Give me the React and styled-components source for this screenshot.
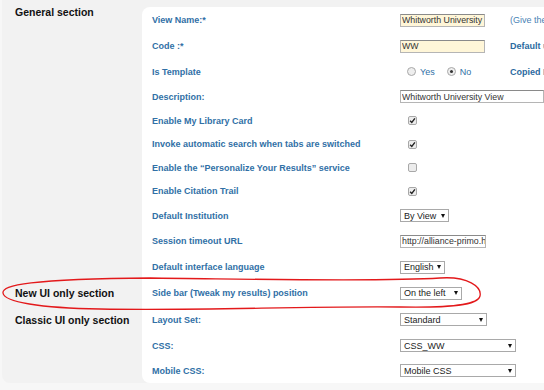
import React  from 'react';
import styled, { createGlobalStyle } from 'styled-components';

const SECTIONS = [
  {
    title : 'General section',
    pad   : 0,
    rows  : [
      { label: 'View Name:*', h: 26, control: { kind: 'text', value: 'Whitworth University', width: 85, tint: true }, note: { text: '(Give the view a name)', bold: false } },
      { label: 'Code :*', h: 26, control: { kind: 'text', value: 'WW', width: 85, tint: true }, note: { text: 'Default user interface', bold: true } },
      { label: 'Is Template', h: 25, control: { kind: 'radio', options: ['Yes', 'No'], selected: 1 }, note: { text: 'Copied From', bold: true } },
      { label: 'Description:', h: 25, control: { kind: 'text', value: 'Whitworth University View', width: 170 } },
      { label: 'Enable My Library Card', h: 23, control: { kind: 'check', checked: true } },
      { label: 'Invoke automatic search when tabs are switched', h: 24, control: { kind: 'check', checked: true } },
      { label: 'Enable the \u201cPersonalize Your Results\u201d service', h: 23, control: { kind: 'check', checked: false } },
      { label: 'Enable Citation Trail', h: 24, control: { kind: 'check', checked: true } },
      { label: 'Default Institution', h: 25, control: { kind: 'select', value: 'By View', width: 49 } },
      { label: 'Session timeout URL', h: 26, control: { kind: 'text', value: 'http://alliance-primo.hosted.exlibrisgroup.com', width: 86 } },
      { label: 'Default interface language', h: 26, control: { kind: 'select', value: 'English', width: 45 } },
    ],
  },
  {
    title : 'New UI only section',
    pad   : 8,
    rows  : [
      { label: 'Side bar (Tweak my results) position', h: 26, control: { kind: 'select', value: 'On the left', width: 62 } },
    ],
  },
  {
    title : 'Classic UI only section',
    pad   : 9,
    rows  : [
      { label: 'Layout Set:', h: 27, control: { kind: 'select', value: 'Standard', width: 87 } },
      { label: 'CSS:', h: 25, control: { kind: 'select', value: 'CSS_WW', width: 116 } },
      { label: 'Mobile CSS:', h: 25, control: { kind: 'select', value: 'Mobile CSS', width: 116 } },
    ],
  },
];

const Control = ({ control }) => {
  switch (control.kind) {
    case 'text':
      return (
        <App.TextField
          readOnly
          defaultValue={control.value}
          $width={control.width}
          $tint={control.tint}
        />
      );
    case 'radio':
      return (
        <App.RadioGroup>
          {control.options.map((o, i) =>
            <App.RadioOption key={o}>
              <App.Radio $on={i === control.selected} />
              {o}
            </App.RadioOption>
          )}
        </App.RadioGroup>
      );
    case 'check':
      return (
        <App.Check>
          <svg width="9" height="9" viewBox="0 0 9 9">
            <rect x="0.5" y="0.5" width="8" height="8" rx="1.5" fill="#ececec" stroke="#a8a8a8" />
            {control.checked &&
              <path d="M2.1 4.7 L3.8 6.4 L6.9 2.4" fill="none" stroke="#222" strokeWidth="1.4" />}
          </svg>
        </App.Check>
      );
    default:
      return (
        <App.Select $width={control.width}>
          {control.value}
          <App.Arrow />
        </App.Select>
      );
  }
};

const App = () => (
  <App.Page>
    <GlobalStyle />
    <App.Sheet>
      {SECTIONS.map((s, si) =>
        <App.Section key={s.title}>
          <App.SectionTitle $pad={s.pad}>{s.title}</App.SectionTitle>
          <App.Fields $first={si === 0} $last={si === SECTIONS.length - 1}>
            {s.rows.map(r =>
              <App.Row key={r.label} $h={r.h}>
                <App.Label>{r.label}</App.Label>
                <App.Cell $wide={!r.note}>
                  <Control control={r.control} />
                </App.Cell>
                {r.note &&
                  <App.Note $bold={r.note.bold}>{r.note.text}</App.Note>}
              </App.Row>
            )}
          </App.Fields>
        </App.Section>
      )}
    </App.Sheet>
    <App.Scribble width="544" height="390" viewBox="0 0 544 390">
      <path
        d="M150 278 C250 279, 380 282, 440 278 C468 276, 482 287, 480 296 C478 305, 452 308, 400 307 C300 306, 200 311, 100 309 C40 308, 4 302, 3 293 C2 285, 30 279, 150 278"
        fill="none"
        stroke="#e3191b"
        strokeWidth="1.3"
      />
    </App.Scribble>
  </App.Page>
);

const GlobalStyle = createGlobalStyle`
  html, body {
    margin     : 0;
    padding    : 0;
    background : #f5f5f5;
  }
`;

App.Page = styled.div`
  position    : relative;
  width       : 544px;
  height      : 390px;
  overflow    : hidden;
  background  : #f7f7f7;
  font-family : 'Liberation Sans', Arial, sans-serif;
`;

App.Sheet = styled.div`
  margin-left                : 2px;
  padding-top                : 7px;
  background                 : #f2f2f2;
  border-bottom-left-radius  : 8px;
`;

App.Section = styled.div`
  display : flex;
`;

App.SectionTitle = styled.div`
  width        : 140px;
  flex-shrink  : 0;
  box-sizing   : border-box;
  padding      : ${p => p.$pad}px 0 0 13px;
  font-size    : 10.5px;
  font-weight  : bold;
  line-height  : 10px;
  color        : #111;
  white-space  : nowrap;
`;

App.Fields = styled.div`
  flex          : 1;
  min-width     : 0;
  padding-left  : 10px;
  background    : #fff;
  overflow      : hidden;
  border-radius : ${p => p.$first ? '8px' : '0'} 0 0 ${p => p.$last ? '8px' : '0'};
`;

App.Row = styled.div`
  display               : grid;
  grid-template-columns : 248px 110px 1fr;
  align-items           : center;
  height                : ${p => p.$h}px;
`;

App.Label = styled.div`
  font-size   : 9px;
  font-weight : bold;
  color       : #3170a6;
  white-space : nowrap;
`;

App.Cell = styled.div`
  display     : flex;
  align-items : center;
  grid-column : ${p => p.$wide ? '2 / 4' : 'auto'};
`;

App.Note = styled.div`
  font-size   : 9px;
  font-weight : ${p => p.$bold ? 'bold' : 'normal'};
  color       : ${p => p.$bold ? '#2c6aa0' : '#4a82b5'};
  white-space : nowrap;
`;

App.TextField = styled.input`
  box-sizing  : border-box;
  width       : ${p => p.$width}px;
  height      : 13px;
  margin      : 0;
  padding     : 0 0 0 1px;
  border      : 1px solid #b5b5b5;
  border-top  : 1px solid #8a8a8a;
  background  : ${p => p.$tint ? '#fff6d8' : '#fff'};
  font-family : 'Liberation Sans', Arial, sans-serif;
  font-size   : 8.8px;
  color       : #333;
  outline     : none;
`;

App.RadioGroup = styled.div`
  display      : flex;
  align-items  : center;
  gap          : 12px;
  padding-left : 7px;
`;

App.RadioOption = styled.span`
  display     : flex;
  align-items : center;
  gap         : 4px;
  font-size   : 9px;
  color       : #3170a6;
`;

App.Radio = styled.span`
  position      : relative;
  width         : 9px;
  height        : 9px;
  box-sizing    : border-box;
  border        : 1px solid #a8a8a8;
  border-radius : 50%;
  background    : #eeeeee;

  &::after {
    content       : '';
    display       : ${p => p.$on ? 'block' : 'none'};
    position      : absolute;
    top           : 2px;
    left          : 2px;
    width         : 3px;
    height        : 3px;
    border-radius : 50%;
    background    : #333;
  }
`;

App.Check = styled.span`
  display     : flex;
  margin-left : 8px;
`;

App.Select = styled.div`
  box-sizing      : border-box;
  width           : ${p => p.$width}px;
  height          : 13px;
  display         : flex;
  align-items     : center;
  justify-content : space-between;
  padding         : 0 3px 0 3px;
  border          : 1px solid #a9a9a9;
  background      : #fff;
  font-size       : 9px;
  color           : #222;
  white-space     : nowrap;
`;

App.Arrow = styled.span`
  width        : 0;
  height       : 0;
  border-left  : 2.5px solid transparent;
  border-right : 2.5px solid transparent;
  border-top   : 4px solid #111;
`;

App.Scribble = styled.svg`
  position       : absolute;
  top            : 0;
  left           : 0;
  pointer-events : none;
`;

export default App;
